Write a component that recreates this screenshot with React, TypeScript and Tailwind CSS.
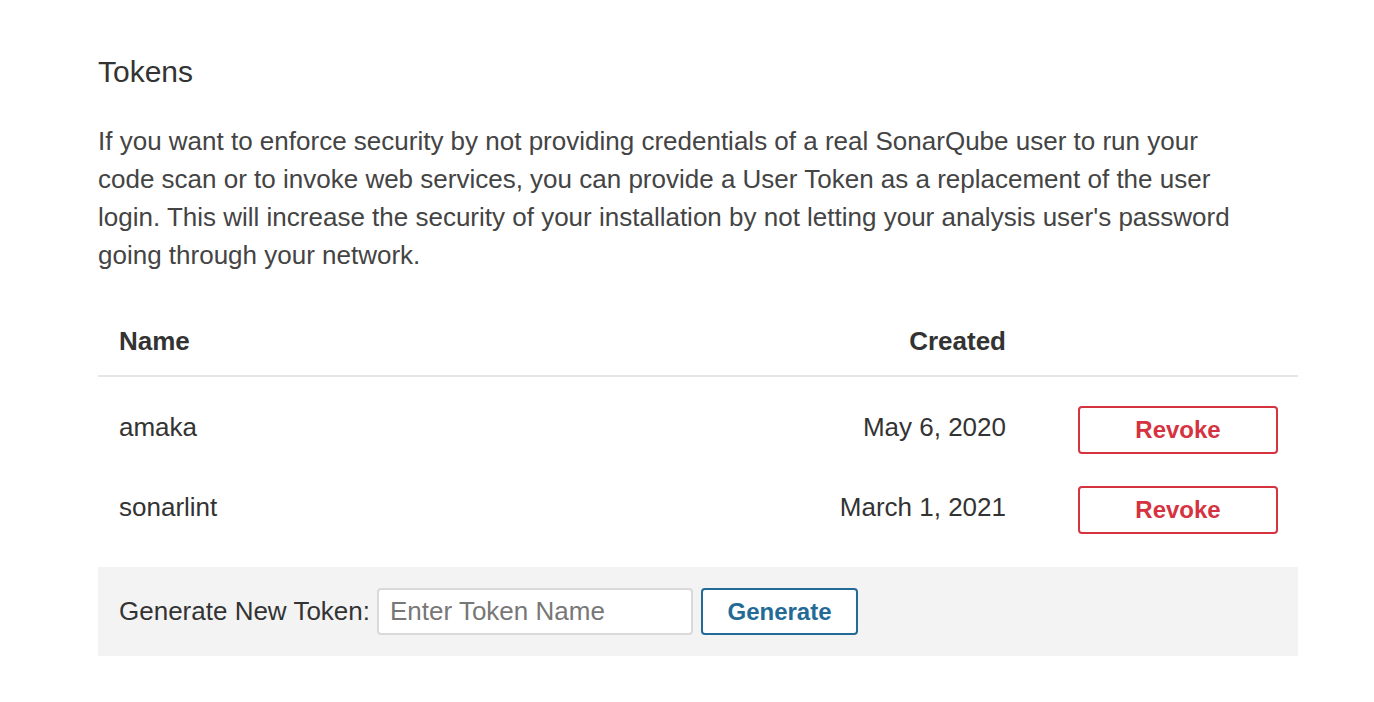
export default function App() {
  const tokens = [
    { name: "amaka", created: "May 6, 2020" },
    { name: "sonarlint", created: "March 1, 2021" },
  ];

  return (
    <div className="min-h-[702px] bg-white font-['Liberation_Sans',Arial,sans-serif] text-[#444]">
      <div className="w-[1200px] ml-[98px] pt-[52px]">
        <h2 className="text-[30px] leading-[40px] text-[#333]">Tokens</h2>
        <p className="mt-[30px] w-[1160px] text-[26px] leading-[38px] text-[#444]">
          If you want to enforce security by not providing credentials of a real SonarQube user to
          run your code scan or to invoke web services, you can provide a User Token as a replacement
          of the user login. This will increase the security of your installation by not letting
          your analysis user's password going through your network.
        </p>

        <div className="mt-[33px]">
          <div className="flex items-center h-[70px] border-b-2 border-[#e6e6e6] text-[26px] font-bold text-[#333]">
            <div className="flex-1 pl-[21px]">Name</div>
            <div className="w-[300px] text-right">Created</div>
            <div className="w-[292px]"></div>
          </div>
          <div className="pt-[10px]">
            {tokens.map((t) => (
              <div key={t.name} className="flex items-center h-[80px] text-[26px] text-[#333]">
                <div className="flex-1 pl-[21px]">{t.name}</div>
                <div className="w-[300px] text-right">{t.created}</div>
                <div className="w-[292px] flex justify-end pr-[20px] pt-[6px]">
                  <button className="w-[200px] h-[48px] border-2 border-[#d4333f] rounded-[4px] text-[#d4333f] font-bold text-[24px] bg-white">
                    Revoke
                  </button>
                </div>
              </div>
            ))}
          </div>
        </div>

        <div className="mt-[20px] h-[89px] bg-[#f3f3f3] flex items-center pl-[21px]">
          <span className="text-[26px] text-[#333]">Generate New Token:</span>
          <input
            placeholder="Enter Token Name"
            className="ml-[7px] w-[316px] h-[47px] bg-white border-2 border-[#d9d9d9] rounded-[4px] px-[11px] text-[26px] placeholder:text-[#777] outline-none"
          />
          <button className="ml-[8px] w-[157px] h-[47px] border-2 border-[#236a97] rounded-[4px] text-[#236a97] font-bold text-[24px] bg-white">
            Generate
          </button>
        </div>
      </div>
    </div>
  );
}
